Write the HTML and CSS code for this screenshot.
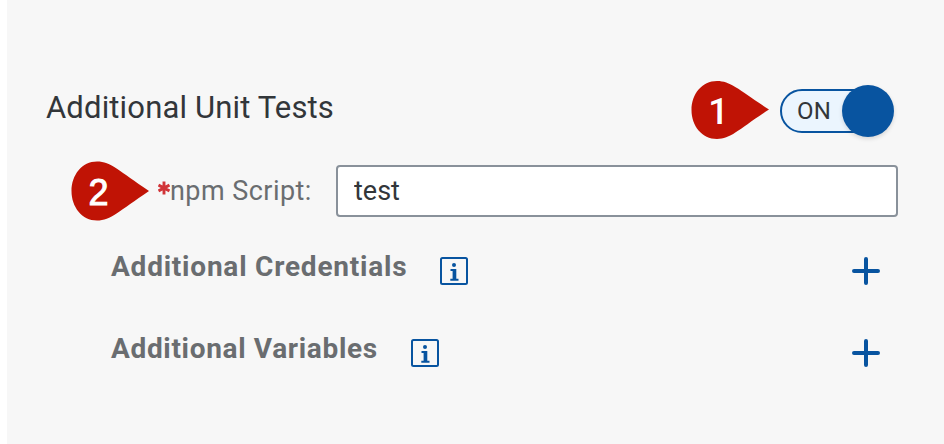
FILE: index.html
```html
<!DOCTYPE html>
<html lang="en">
<head>
<meta charset="utf-8">
<title>Additional Unit Tests</title>
<link rel="stylesheet" href="styles.css">
</head>
<body>
<main class="panel">
  <div class="row header">
    <h1 class="title">Additional Unit Tests</h1>
    <div class="marker first"><svg viewBox="0 0 78 60"><path d="M26 1C40 1 48 10 78 29.500C48 49 40 59 26 59C11 59 0.500 46 0.500 30S11 1 26 1Z"/></svg><span>1</span></div>
    <div class="switch"><div class="track">ON</div><div class="knob"></div></div>
  </div>
  <div class="row field">
    <div class="marker"><svg viewBox="0 0 78 60"><path d="M26 0.500C40 0.500 48 10 78 30C48 50 40 59.500 26 59.500C11 59.500 0.500 46 0.500 30S11 0.500 26 0.500Z"/></svg><span>2</span></div>
    <label class="label" for="script"><svg class="star" viewBox="0 0 12 14"><path d="M6 0.500V13.500M0.500 4L11.500 10M11.500 4L0.500 10"/></svg><span class="name">npm Script:</span></label>
    <input class="input" id="script" type="text" value="test">
  </div>
  <div class="row group">
    <h2 class="subtitle credentials">Additional Credentials</h2>
    <svg class="info" viewBox="0 0 28 28"><rect x="1" y="1" width="26" height="26" rx="1.500"/><circle cx="14" cy="8" r="2"/><path d="M10.500 12H16.300V21.700H18.500V23.700H10.300V21.700H12.600V14H10.500Z"/></svg>
    <svg class="plus" viewBox="0 0 28 28"><path d="M14 2V26M2 14H26"/></svg>
  </div>
  <div class="row group">
    <h2 class="subtitle variables">Additional Variables</h2>
    <svg class="info" viewBox="0 0 28 28"><rect x="1" y="1" width="26" height="26" rx="1.500"/><circle cx="14" cy="8" r="2"/><path d="M10.500 12H16.300V21.700H18.500V23.700H10.300V21.700H12.600V14H10.500Z"/></svg>
    <svg class="plus" viewBox="0 0 28 28"><path d="M14 2V26M2 14H26"/></svg>
  </div>
</main>
</body>
</html>
```
FILE: styles.css
```css
* { box-sizing: border-box; }
body { margin: 0; background: #fff; font-family: Roboto, "Liberation Sans", sans-serif; }
svg { display: block; flex: none; }
.panel { margin-left: 7px; height: 444px; padding-top: 80px; background: #f7f7f7; overflow: hidden; }
.row { display: flex; align-items: center; }
.header { height: 60px; padding: 0 50px 0 39px; }
.title { margin: 0 auto 5px 0; font-size: 31px; line-height: 40px; font-weight: 400; letter-spacing: 0.150px; color: #32363a; white-space: nowrap; }
.marker { display: grid; width: 78px; height: 60px; flex: none; }
.marker svg, .marker span { grid-area: 1 / 1; }
.marker svg { width: 78px; height: 60px; fill: #c01305; }
.marker span { position: relative; width: 55px; color: #fff; font: 400 36px/64px "Liberation Sans", sans-serif; text-align: center; -webkit-text-stroke: 1px #fff; }
.first { margin-right: 11px; }
.marker.first span { width: 55px; font: 500 36px/65px Roboto, sans-serif; -webkit-text-stroke: 0; }
.switch { display: flex; align-items: center; width: 114px; height: 52px; margin-top: 2px; }
.track { width: 100px; height: 44px; padding-left: 15px; border: 2px solid #0854a0; border-radius: 22px; background: #ebf5fe; color: #32363a; font-size: 24px; line-height: 41px; letter-spacing: 0.300px; flex: none; }
.knob { width: 52px; height: 52px; margin-left: -38px; border-radius: 50%; background: #0854a0; box-shadow: 0 2px 4px #0002; flex: none; }
.field { height: 60px; margin-top: 21px; padding-left: 64px; }
.label { display: flex; align-items: center; width: 187px; padding-left: 9px; color: #6a6d70; font-size: 27px; letter-spacing: 0.450px; white-space: nowrap; }
.star { width: 12px; height: 14px; margin-top: -6px; fill: none; stroke: #d13438; stroke-width: 2.900; }
.input { width: 562px; height: 52px; padding: 0 16px; border: 2px solid #89919a; border-radius: 4px; background: #fff; color: #32363a; font: 27px Roboto, sans-serif; outline: 0; }
.group { height: 52px; margin: 24px 64px 0 104px; }
.group + .group { margin-top: 30px; }
.subtitle { margin: 0 33px 8px 0; font-size: 28px; line-height: 36px; font-weight: 700; letter-spacing: 0.780px; color: #6a6d70; white-space: nowrap; }
.variables { letter-spacing: 0.670px; }
.info { width: 28px; height: 28px; fill: #0854a0; }
.info rect { fill: none; stroke: #0854a0; stroke-width: 2; }
.plus { width: 28px; height: 28px; margin-left: auto; fill: none; stroke: #0854a0; stroke-width: 4; stroke-linecap: round; }
```
